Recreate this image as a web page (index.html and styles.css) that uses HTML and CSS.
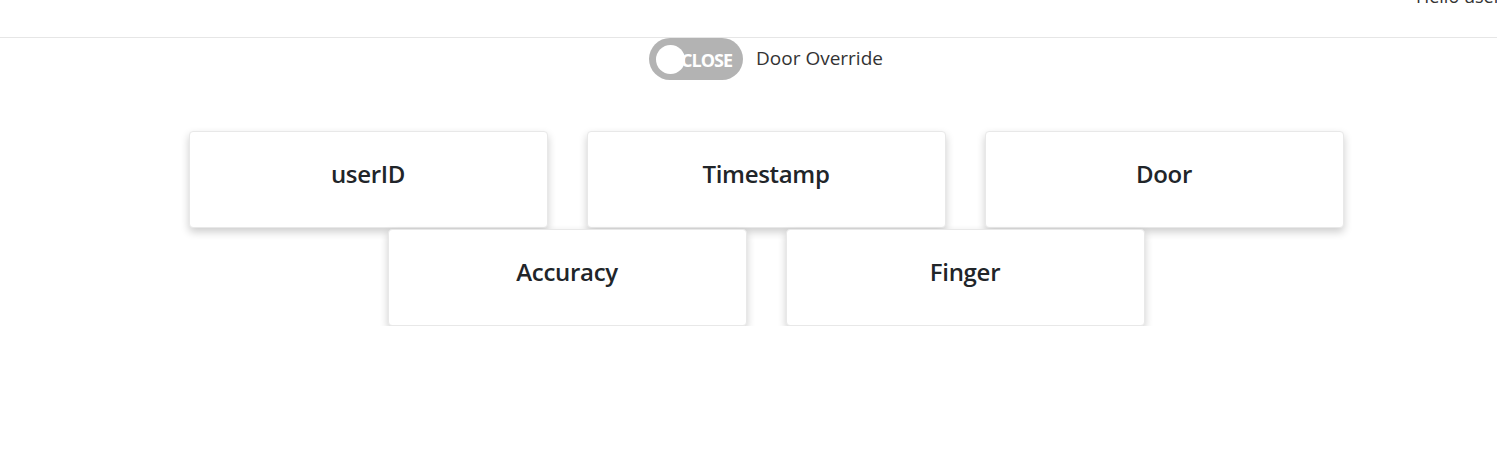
FILE: index.html
```html
<!DOCTYPE html>
<html>
<head>
<meta charset="utf-8">
<link rel="stylesheet" href="styles.css">
</head>
<body>
<header class="topbar">
  <span class="greeting">Hello user</span>
</header>
<main class="page">
  <div class="override">
    <div class="toggle">
      <span class="toggle-label">CLOSE</span>
      <span class="knob"></span>
    </div>
    <span class="override-label">Door Override</span>
  </div>
  <div class="cards">
    <div class="card"><h2>userID</h2></div>
    <div class="card"><h2>Timestamp</h2></div>
    <div class="card"><h2>Door</h2></div>
    <div class="card"><h2>Accuracy</h2></div>
    <div class="card"><h2>Finger</h2></div>
  </div>
</main>
</body>
</html>
```
FILE: styles.css
```css
html, body {
  margin: 0;
  padding: 0;
  background: #fff;
  font-family: "Open Sans", "Noto Sans", sans-serif;
  color: #212529;
  overflow: hidden;
}
.topbar {
  height: 37px;
  border-bottom: 1px solid #e6e6e6;
  display: flex;
  justify-content: flex-end;
  align-items: flex-start;
  overflow: hidden;
}
.greeting {
  font-size: 18px;
  line-height: 18px;
  margin-top: -13px;
  margin-right: -4px;
  color: #333;
}
.page {
  padding-left: 35px;
}
.override {
  display: flex;
  justify-content: center;
  align-items: center;
  gap: 13px;
}
.toggle {
  position: relative;
  width: 94px;
  height: 42px;
  border-radius: 21px;
  background: #b3b3b3;
  display: flex;
  align-items: center;
  justify-content: flex-end;
  padding-right: 11px;
  box-sizing: border-box;
}
.knob {
  position: absolute;
  left: 7px;
  top: 7px;
  width: 29px;
  height: 29px;
  border-radius: 50%;
  background: #fff;
}
.toggle-label {
  color: #fff;
  font-weight: 700;
  font-size: 18px;
  letter-spacing: -1px;
  margin-top: 1px;
}
.override-label {
  font-size: 19px;
  color: #333;
  margin-top: -3px;
}
.cards {
  display: flex;
  flex-wrap: wrap;
  justify-content: center;
  column-gap: 39px;
  row-gap: 1px;
  width: 1155px;
  margin: 51px auto 0;
}
.card {
  width: 359px;
  height: 97px;
  box-sizing: border-box;
  border: 1px solid #e8e8e8;
  border-radius: 4px;
  background: #fff;
  box-shadow: 0 4px 8px rgba(0,0,0,0.2);
  display: flex;
  justify-content: center;
  padding-top: 24px;
}
.card h2 {
  margin: 0;
  font-size: 24px;
  font-weight: 600;
  color: #212529;
  line-height: 36px;
  letter-spacing: -0.3px;
}
```
